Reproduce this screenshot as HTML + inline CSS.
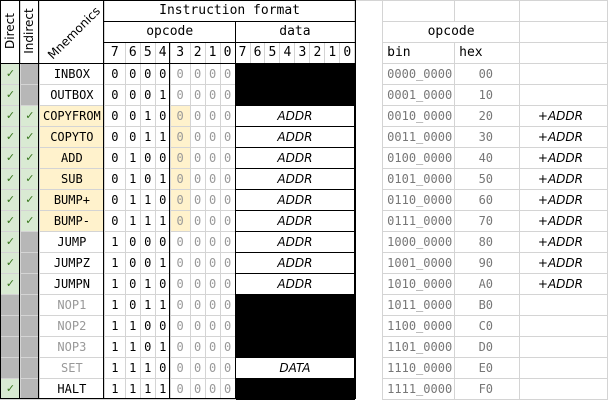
<!DOCTYPE html>
<html><head><meta charset="utf-8"><style>
body{margin:0;width:608px;height:400px;overflow:hidden;background:#fff;position:relative;font-family:"DejaVu Sans Mono","Liberation Mono",monospace;font-size:12px;color:#000}
table{border-collapse:collapse;table-layout:fixed;position:absolute;left:0;top:0}
td{border:1px solid #d4d4d4;height:20px;padding:0;text-align:center;white-space:nowrap;overflow:hidden;line-height:20px}
tr{height:21px}
.g{background:#d9ead3;color:#38761d;font-family:"DejaVu Sans",sans-serif;font-size:11px}
.k{background:#b7b7b7}
.o{background:#fff2cc}
.lt{color:#999}
.bk{background:#000;border-color:#000}
.dt{border-color:#000;font-style:italic;font-family:"DejaVu Sans",sans-serif;font-size:12px}
.gap{border-top:none;border-bottom:none}
.bin{text-align:left;padding-left:4px;color:#777}
.hex{text-align:right;padding-right:26px;color:#777}
.ad{font-style:italic;font-family:"DejaVu Sans",sans-serif;text-align:right;padding-right:24px}
.v{position:absolute;background:#000}
.rot{position:absolute;font-family:"DejaVu Sans",sans-serif;font-size:12px;white-space:nowrap}
</style></head><body>
<table>
<colgroup><col style="width:20px"><col style="width:19px"><col style="width:65px"><col style="width:21px"><col style="width:15px"><col style="width:15px"><col style="width:15px"><col style="width:20px"><col style="width:15px"><col style="width:15px"><col style="width:15px"><col style="width:15px"><col style="width:15px"><col style="width:15px"><col style="width:15px"><col style="width:15px"><col style="width:15px"><col style="width:15px"><col style="width:15px"><col style="width:28px"><col style="width:72px"><col style="width:65px"><col style="width:88px"></colgroup>
<tr><td rowspan="3"></td><td rowspan="3"></td><td rowspan="3"></td><td colspan="16" style="font-size:13px">Instruction format</td><td class="gap" style="border-top:1px solid #d4d4d4"></td><td></td><td></td><td></td></tr>
<tr><td colspan="8" style="font-size:13px">opcode</td><td colspan="8" style="font-size:13px">data</td><td class="gap"></td><td colspan="2" style="font-size:13px">opcode</td><td></td></tr>
<tr style="font-size:13px"><td>7</td><td>6</td><td>5</td><td>4</td><td>3</td><td>2</td><td>1</td><td>0</td><td>7</td><td>6</td><td>5</td><td>4</td><td>3</td><td>2</td><td>1</td><td>0</td><td class="gap"></td><td style="text-align:left;padding-left:4px">bin</td><td style="text-align:left;padding-left:4px">hex</td><td></td></tr>
<tr><td class="g">✓</td><td class="k"></td><td>INBOX</td><td>0</td><td>0</td><td>0</td><td>0</td><td class="lt">0</td><td class="lt">0</td><td class="lt">0</td><td class="lt">0</td><td colspan="8" class="bk"></td><td class="gap"></td><td class="bin">0000_0000</td><td class="hex">00</td><td></td></tr>
<tr><td class="g">✓</td><td class="k"></td><td>OUTBOX</td><td>0</td><td>0</td><td>0</td><td>1</td><td class="lt">0</td><td class="lt">0</td><td class="lt">0</td><td class="lt">0</td><td colspan="8" class="bk"></td><td class="gap"></td><td class="bin">0001_0000</td><td class="hex">10</td><td></td></tr>
<tr><td class="g">✓</td><td class="g">✓</td><td class="o">COPYFROM</td><td>0</td><td>0</td><td>1</td><td>0</td><td class="lt o">0</td><td class="lt">0</td><td class="lt">0</td><td class="lt">0</td><td colspan="8" class="dt">ADDR</td><td class="gap"></td><td class="bin">0010_0000</td><td class="hex">20</td><td class="ad">+ADDR</td></tr>
<tr><td class="g">✓</td><td class="g">✓</td><td class="o">COPYTO</td><td>0</td><td>0</td><td>1</td><td>1</td><td class="lt o">0</td><td class="lt">0</td><td class="lt">0</td><td class="lt">0</td><td colspan="8" class="dt">ADDR</td><td class="gap"></td><td class="bin">0011_0000</td><td class="hex">30</td><td class="ad">+ADDR</td></tr>
<tr><td class="g">✓</td><td class="g">✓</td><td class="o">ADD</td><td>0</td><td>1</td><td>0</td><td>0</td><td class="lt o">0</td><td class="lt">0</td><td class="lt">0</td><td class="lt">0</td><td colspan="8" class="dt">ADDR</td><td class="gap"></td><td class="bin">0100_0000</td><td class="hex">40</td><td class="ad">+ADDR</td></tr>
<tr><td class="g">✓</td><td class="g">✓</td><td class="o">SUB</td><td>0</td><td>1</td><td>0</td><td>1</td><td class="lt o">0</td><td class="lt">0</td><td class="lt">0</td><td class="lt">0</td><td colspan="8" class="dt">ADDR</td><td class="gap"></td><td class="bin">0101_0000</td><td class="hex">50</td><td class="ad">+ADDR</td></tr>
<tr><td class="g">✓</td><td class="g">✓</td><td class="o">BUMP+</td><td>0</td><td>1</td><td>1</td><td>0</td><td class="lt o">0</td><td class="lt">0</td><td class="lt">0</td><td class="lt">0</td><td colspan="8" class="dt">ADDR</td><td class="gap"></td><td class="bin">0110_0000</td><td class="hex">60</td><td class="ad">+ADDR</td></tr>
<tr><td class="g">✓</td><td class="g">✓</td><td class="o">BUMP-</td><td>0</td><td>1</td><td>1</td><td>1</td><td class="lt o">0</td><td class="lt">0</td><td class="lt">0</td><td class="lt">0</td><td colspan="8" class="dt">ADDR</td><td class="gap"></td><td class="bin">0111_0000</td><td class="hex">70</td><td class="ad">+ADDR</td></tr>
<tr><td class="g">✓</td><td class="k"></td><td>JUMP</td><td>1</td><td>0</td><td>0</td><td>0</td><td class="lt">0</td><td class="lt">0</td><td class="lt">0</td><td class="lt">0</td><td colspan="8" class="dt">ADDR</td><td class="gap"></td><td class="bin">1000_0000</td><td class="hex">80</td><td class="ad">+ADDR</td></tr>
<tr><td class="g">✓</td><td class="k"></td><td>JUMPZ</td><td>1</td><td>0</td><td>0</td><td>1</td><td class="lt">0</td><td class="lt">0</td><td class="lt">0</td><td class="lt">0</td><td colspan="8" class="dt">ADDR</td><td class="gap"></td><td class="bin">1001_0000</td><td class="hex">90</td><td class="ad">+ADDR</td></tr>
<tr><td class="g">✓</td><td class="k"></td><td>JUMPN</td><td>1</td><td>0</td><td>1</td><td>0</td><td class="lt">0</td><td class="lt">0</td><td class="lt">0</td><td class="lt">0</td><td colspan="8" class="dt">ADDR</td><td class="gap"></td><td class="bin">1010_0000</td><td class="hex">A0</td><td class="ad">+ADDR</td></tr>
<tr><td class="k"></td><td class="k"></td><td class="lt">NOP1</td><td>1</td><td>0</td><td>1</td><td>1</td><td class="lt">0</td><td class="lt">0</td><td class="lt">0</td><td class="lt">0</td><td colspan="8" class="bk"></td><td class="gap"></td><td class="bin">1011_0000</td><td class="hex">B0</td><td></td></tr>
<tr><td class="k"></td><td class="k"></td><td class="lt">NOP2</td><td>1</td><td>1</td><td>0</td><td>0</td><td class="lt">0</td><td class="lt">0</td><td class="lt">0</td><td class="lt">0</td><td colspan="8" class="bk"></td><td class="gap"></td><td class="bin">1100_0000</td><td class="hex">C0</td><td></td></tr>
<tr><td class="k"></td><td class="k"></td><td class="lt">NOP3</td><td>1</td><td>1</td><td>0</td><td>1</td><td class="lt">0</td><td class="lt">0</td><td class="lt">0</td><td class="lt">0</td><td colspan="8" class="bk"></td><td class="gap"></td><td class="bin">1101_0000</td><td class="hex">D0</td><td></td></tr>
<tr><td class="k"></td><td class="k"></td><td class="lt">SET</td><td>1</td><td>1</td><td>1</td><td>0</td><td class="lt">0</td><td class="lt">0</td><td class="lt">0</td><td class="lt">0</td><td colspan="8" class="dt">DATA</td><td class="gap"></td><td class="bin">1110_0000</td><td class="hex">E0</td><td></td></tr>
<tr><td class="g">✓</td><td class="k"></td><td>HALT</td><td>1</td><td>1</td><td>1</td><td>1</td><td class="lt">0</td><td class="lt">0</td><td class="lt">0</td><td class="lt">0</td><td colspan="8" class="bk"></td><td class="gap"></td><td class="bin">1111_0000</td><td class="hex">F0</td><td></td></tr>
</table>
<div class="v" style="left:0;top:0;width:1px;height:399px"></div>
<div class="v" style="left:19px;top:0;width:1px;height:399px"></div>
<div class="v" style="left:38px;top:0;width:1px;height:399px"></div>
<div class="v" style="left:103px;top:0;width:1px;height:399px"></div>
<div class="v" style="left:169px;top:42px;width:1px;height:357px"></div>
<div class="v" style="left:235px;top:21px;width:1px;height:378px"></div>
<div class="v" style="left:355px;top:0;width:1px;height:399px"></div>
<div class="v" style="left:0;top:0;width:356px;height:1px"></div>
<div class="v" style="left:103px;top:21px;width:253px;height:1px"></div>
<div class="v" style="left:103px;top:42px;width:253px;height:1px"></div>
<div class="v" style="left:0;top:63px;width:356px;height:1px"></div>
<div class="v" style="left:0;top:398px;width:356px;height:1px"></div>
<div class="rot" style="left:-10px;top:24px;width:40px;text-align:center;transform:rotate(-90deg)">Direct</div>
<div class="rot" style="left:4px;top:24px;width:50px;text-align:center;transform:rotate(-90deg)">Indirect</div>
<div class="rot" style="left:36px;top:26px;width:76px;text-align:center;transform:rotate(-45deg)">Mnemonics</div>
</body></html>
